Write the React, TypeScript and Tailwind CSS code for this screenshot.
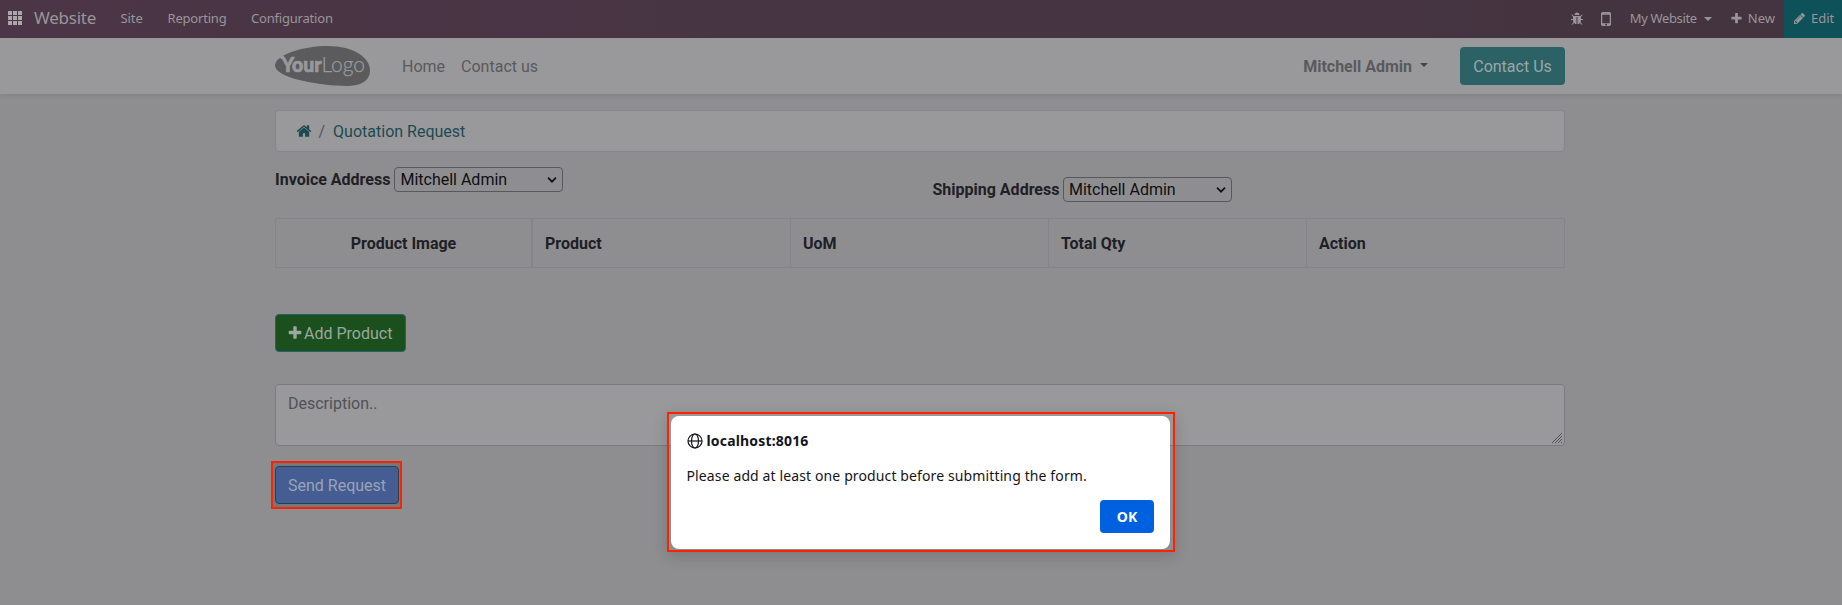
import type { ReactNode } from "react";

const paths = {
  home: "M1472 992v480q0 26-19 45t-45 19h-384v-384h-256v384h-384q-26 0-45-19t-19-45v-480q0-1 .5-3t.5-3l575-474 575 474q1 2 1 6zm223-69l-62 74q-8 9-21 11h-3q-13 0-21-7l-692-577-692 577q-12 8-24 7-13-2-21-11l-62-74q-8-10-7-23.5t11-21.5l719-599q32-26 76-26t76 26l244 204v-195q0-14 9-23t23-9h192q14 0 23 9t9 23v408l219 182q10 8 11 21.5t-7 23.5z",
  plus: "M1600 736v192q0 40-28 68t-68 28h-416v416q0 40-28 68t-68 28h-192q-40 0-68-28t-28-68v-416h-416q-40 0-68-28t-28-68v-192q0-40 28-68t68-28h416v-416q0-40 28-68t68-28h192q40 0 68 28t28 68v416h416q40 0 68 28t28 68z",
  pencil: "M491 1536l91-91-235-235-91 91v107h128v128h107zm523-928q0-22-22-22-10 0-17 7l-542 542q-7 7-7 17 0 22 22 22 10 0 17-7l542-542q7-7 7-17zm-54-192l416 416-832 832h-416v-416zm683 96q0 53-37 90l-166 166-416-416 166-165q36-38 90-38 53 0 91 38l235 234q37 39 37 91z",
  mobile: "M976 1408q0-33-23.5-56.5t-56.5-23.5-56.5 23.5-23.5 56.5 23.5 56.5 56.5 23.5 56.5-23.5 23.5-56.5zm208-160v-704q0-13-9.5-22.5t-22.5-9.5h-512q-13 0-22.5 9.5t-9.5 22.5v704q0 13 9.5 22.5t22.5 9.5h512q13 0 22.5-9.5t9.5-22.5zm-192-848q0-16-16-16h-160q-16 0-16 16t16 16h160q16 0 16-16zm288-16v1024q0 52-38 90t-90 38h-512q-52 0-90-38t-38-90v-1024q0-52 38-90t90-38h512q52 0 90 38t38 90z",
  bug: "M1696 960q0 26-19 45t-45 19h-224q0 171-67 290l208 209q19 19 19 45t-19 45q-18 19-45 19t-45-19l-198-197q-5 5-15 13t-42 28.5-65 36.5-82 29-97 13v-896h-128v896q-51 0-101.5-13.5t-87-33-66-39-43.5-32.5l-15-14-183 207q-20 21-48 21-24 0-43-16-19-18-20.5-44.5t15.5-46.5l202-227q-58-114-58-274h-224q-26 0-45-19t-19-45 19-45 45-19h224v-294l-173-173q-19-19-19-45t19-45 45-19 45 19l173 173h844l173-173q19-19 45-19t45 19 19 45-19 45l-173 173v294h224q26 0 45 19t19 45zm-480-576h-640q0-133 93.5-226.5t226.5-93.5 226.5 93.5 93.5 226.5z",
};

function Icon({ name, className, viewBox = "0 0 1792 1792" }: { name: keyof typeof paths; className: string; viewBox?: string }) {
  return (
    <svg viewBox={viewBox} preserveAspectRatio="none" fill="currentColor" className={className}>
      <path d={paths[name]} />
    </svg>
  );
}

function TopBar() {
  return (
    <nav className="flex h-[38px] items-center bg-linear-to-r from-[#4b3546] to-[#43343f] pl-2 font-['Noto_Sans',sans-serif] text-[13px] text-[#99959a]">
      <svg viewBox="0 0 14 14" className="mb-[2px] size-3.5 fill-[#aaa7ab]" shapeRendering="crispEdges">
        {[0, 5, 10].map((y) => [0, 5, 10].map((x) => <rect key={x + "-" + y} x={x} y={y} width="4" height="4" />))}
      </svg>
      <span className="mb-[2px] ml-[12px] w-[86.5px] text-[17px] tracking-[-0.25px] whitespace-nowrap">Website</span>
      <span className="mb-[2px] w-[47px] tracking-[-0.1px]">Site</span>
      <span className="mb-[2px] w-[83.5px] tracking-[-0.2px]">Reporting</span>
      <span className="mb-[2px] tracking-[-0.2px]">Configuration</span>
      <div className="ml-auto flex h-full items-center">
        <Icon name="bug" className="mb-[1px] size-[14px]" />
        <Icon name="mobile" viewBox="512 256 768 1280" className="ml-[17.5px] h-[14px] w-[10px]" />
        <span className="mb-[2px] ml-[18.5px] tracking-[-0.35px]">My Website</span>
        <svg viewBox="0 0 8 4" className="ml-[7px] h-1 w-2 fill-current"><path d="M0 0h8L4 4z" /></svg>
        <Icon name="plus" className="mb-[2px] ml-[18px] size-[13px]" />
        <span className="mb-[2px] ml-[5px]">New</span>
        <div className="ml-[9px] flex h-full w-[58px] items-center bg-[#0e5158] pl-[9px]">
          <Icon name="pencil" className="mb-[1px] size-[13px]" />
          <span className="mb-[2px] ml-[5px]">Edit</span>
        </div>
      </div>
    </nav>
  );
}

function Logo() {
  return (
    <svg viewBox="0 0 95 40" className="h-10 w-[95px]">
      <path d="M0 19C1 8 30 0 52 0C80 0 95 12 95 25C95 35 85 40 72 40C45 40 -1 32 0 19Z" fill="#5b5b5d" />
      <path d="M4 10h5v3h-3z" fill="#99999b" />
      <text x="6.500" y="25.500" textLength="40" lengthAdjust="spacingAndGlyphs" className="fill-[#99999b] stroke-[#99999b] font-['Lato',sans-serif] text-[21px] font-black" strokeWidth=".7">Your</text>
      <text x="46.500" y="25.500" textLength="43.500" lengthAdjust="spacingAndGlyphs" className="fill-[#99999b] stroke-[#99999b] font-['Lato',sans-serif] text-[21px] font-light" strokeWidth=".25">Logo</text>
    </svg>
  );
}

function Header() {
  return (
    <header className="h-14 bg-[#99999b] shadow-[0_2px_4px_rgba(0,0,0,0.075)]">
      <div className="ml-[275px] flex h-full w-[1290px] items-center text-[#5a5a5c]">
        <Logo />
        <a className="mt-[2px] ml-[32px]">Home</a>
        <a className="mt-[2px] ml-4">Contact us</a>
        <div className="mt-[2px] ml-auto flex items-center font-bold">
          Mitchell Admin
          <svg viewBox="0 0 8 4" className="mb-[5px] ml-2 h-1 w-2 fill-[#444446]"><path d="M0 0h8L4 4z" /></svg>
        </div>
        <button className="ml-8 h-[38px] w-[105px] rounded-[4px] bg-[#2c6266] pt-[2px] text-[#9aa7a9]">Contact Us</button>
      </div>
    </header>
  );
}

function Select() {
  return (
    <div className="flex h-[25px] w-[169px] items-center rounded-[4px] border border-[#58585f] pr-[5px] pl-[5px] text-[#0f0f12]">
      <span>Mitchell Admin</span>
      <svg viewBox="0 0 10 6" className="ml-auto h-[6px] w-[10px] fill-none stroke-[#111113]" strokeWidth="1.700"><path d="M1 .7l4 4 4-4" /></svg>
    </div>
  );
}

function Cell({ children, first }: { children: ReactNode; first?: boolean }) {
  return (
    <div className={first ? "flex items-center justify-center border-r-2 border-[#858489] pt-[2px]" : "flex items-center border-r border-[#858489] pt-[2px] pl-3"}>
      {children}
    </div>
  );
}

function Dialog() {
  return (
    <div className="absolute top-[412px] left-[667px] h-[140px] w-[508px] border-2 border-[#ff2200] p-[2px] shadow-[0_4px_14px_rgba(0,0,0,0.16)]">
      <div className="flex h-[133px] w-[499px] flex-col rounded-[8px] bg-white pr-4 pl-[15.5px] font-['Noto_Sans',sans-serif] text-[14px] text-[#15141a]">
        <div className="mt-[15px] flex h-5 items-center font-bold">
          <svg viewBox="0 0 16 16" className="mr-[3.5px] ml-[0.5px] size-4 fill-none stroke-[#15141a]" strokeWidth="1.200">
            <circle cx="8" cy="8" r="7" /><ellipse cx="8" cy="8" rx="3.500" ry="7" /><path d="M1 8h14" />
          </svg>
          <span className="tracking-[0.17px]">localhost:8016</span>
        </div>
        <p className="mt-[15px] h-5 leading-5 tracking-[0.12px] whitespace-nowrap">Please add at least one product before submitting the form.</p>
        <button className="mt-[14px] h-[33px] w-[54px] self-end rounded-[4px] bg-[#0061e0] font-bold text-white">OK</button>
      </div>
    </div>
  );
}

export default function App() {
  return (
    <div className="relative h-[605px] w-[1842px] overflow-hidden bg-[#8e8e90] font-['Roboto',sans-serif] text-[16px] leading-6 text-[#1e2026]">
      <TopBar />
      <Header />
      <main className="ml-[275px] w-[1290px]">
        <div className="mt-4 flex h-[42px] items-center rounded-[4px] border border-[#85858c] bg-[#99999b] pl-[19.5px] text-[#1d4a50]">
          <Icon name="home" className="size-4" />
          <span className="mt-[2px] ml-[7px] text-[#55565b]">/</span>
          <span className="mt-[2px] ml-2">Quotation Request</span>
        </div>
        <div className="flex h-[66px] font-bold">
          <div className="mt-[15px] flex h-[25px] w-[657.5px] items-center">
            <span className="mr-1">Invoice Address</span>
            <div className="font-normal"><Select /></div>
          </div>
          <div className="mt-[25px] flex h-[25px] items-center">
            <span className="mr-[3.5px]">Shipping Address</span>
            <div className="font-normal"><Select /></div>
          </div>
        </div>
        <div className="grid h-[50px] grid-cols-[257px_258px_258px_258px_1fr] border border-r-0 border-[#858489] font-bold">
          <Cell first>Product Image</Cell>
          <Cell>Product</Cell>
          <Cell>UoM</Cell>
          <Cell>Total Qty</Cell>
          <Cell>Action</Cell>
        </div>
        <button className="mt-[46px] flex h-[38px] w-[131px] items-center rounded-[4px] border border-[#23626a] bg-[#1b4f1e] pl-[11px] text-[#9ba89d]">
          <Icon name="plus" className="mr-[1px] size-4" />
          <span className="mt-[2px]">Add Product</span>
        </button>
        <div className="mt-8 flex h-[62px] justify-between rounded-[4px] border border-[#7b7b82] bg-[#99999b] pt-[7px] pl-3 text-[#505158]">
          Description..
          <svg viewBox="0 0 12 12" className="mr-[1px] mb-[1px] size-3 self-end fill-none stroke-[#4e4e52]" strokeWidth=".9">
            <path d="M1 11L11 1M4 11l7-7M7 11l4-4M10 11l1-1" />
          </svg>
        </div>
        <div className="mt-[15px] -ml-1 h-12 w-[131px] border-2 border-[#ff2200] bg-[#71797e] pt-[3px] pl-[2px]">
          <button className="h-[38px] w-[124px] rounded-[4px] border border-[#20454e] bg-[#455d92] pt-[2px] text-[#9aa4b8]">Send Request</button>
        </div>
      </main>
      <Dialog />
    </div>
  );
}
